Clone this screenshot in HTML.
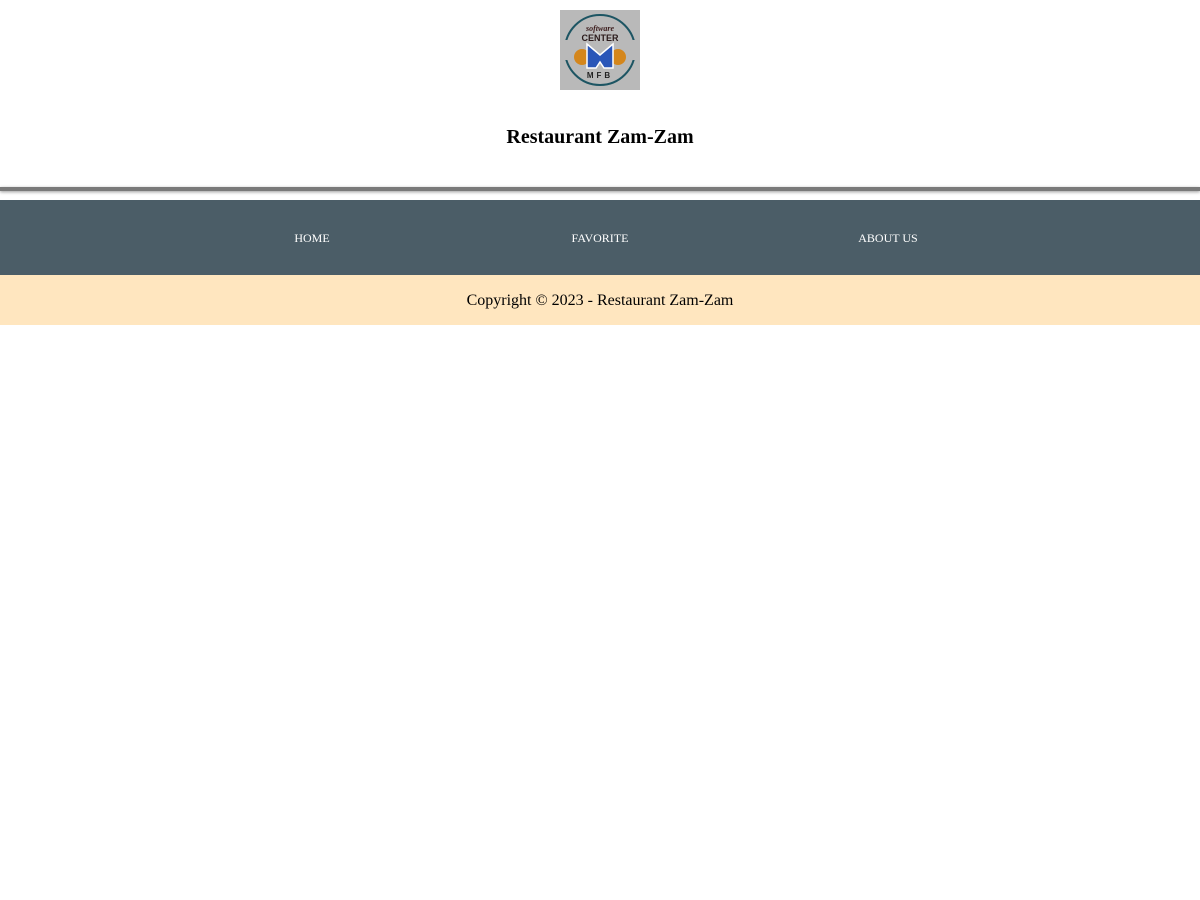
<!DOCTYPE html>
<html><head><meta charset="utf-8"><style>
html,body{margin:0;padding:0;background:#fff;font-family:"Liberation Serif",serif;}
.logo{position:absolute;left:560px;top:10px;width:80px;height:80px;background:#b9b9b9;}
h1{position:absolute;top:126px;left:0;width:1200px;margin:0;text-align:center;font-size:20px;font-weight:bold;}
.line{position:absolute;top:187px;left:0;width:1200px;height:4px;background:#7a7a7a;box-shadow:0 1px 3px rgba(0,0,0,.4);}
nav{position:absolute;top:200px;left:0;width:1200px;height:75px;background:#4b5d67;}
nav a{position:absolute;top:31px;color:#fff;font-size:12px;text-decoration:none;transform:translateX(-50%);}
footer{position:absolute;top:275px;left:0;width:1200px;height:50px;background:#ffe6bf;text-align:center;line-height:51px;font-size:16px;}
</style></head><body>
<div class="logo"><svg width="80" height="80" viewBox="0 0 80 80">
<circle cx="40" cy="40" r="35" fill="none" stroke="#1d5563" stroke-width="2"/>
<rect x="0" y="30" width="8" height="20" fill="#b9b9b9"/><rect x="72" y="30" width="8" height="20" fill="#b9b9b9"/>
<text x="40" y="21" font-size="8" font-style="italic" font-weight="bold" text-anchor="middle" fill="#3a1a1a" font-family="Liberation Serif">software</text>
<text x="40" y="31" font-size="9" font-weight="bold" text-anchor="middle" fill="#2a1a1a" font-family="Liberation Sans">CENTER</text>
<circle cx="22" cy="47" r="8" fill="#d4861c"/><circle cx="58" cy="47" r="8" fill="#d4861c"/>
<path d="M27 34 L40 45 L53 34 L53 58 L44 58 L40 52 L36 58 L27 58 Z" fill="#2a56b8" stroke="#fff" stroke-width="1.5"/>
<text x="40" y="68" font-size="8" font-weight="bold" text-anchor="middle" fill="#222" font-family="Liberation Sans" letter-spacing="3">MFB</text>
</svg></div>
<h1>Restaurant Zam-Zam</h1>
<div class="line"></div>
<nav><a style="left:312px">HOME</a><a style="left:600px">FAVORITE</a><a style="left:888px">ABOUT US</a></nav>
<footer>Copyright © 2023 - Restaurant Zam-Zam</footer>
</body></html>
